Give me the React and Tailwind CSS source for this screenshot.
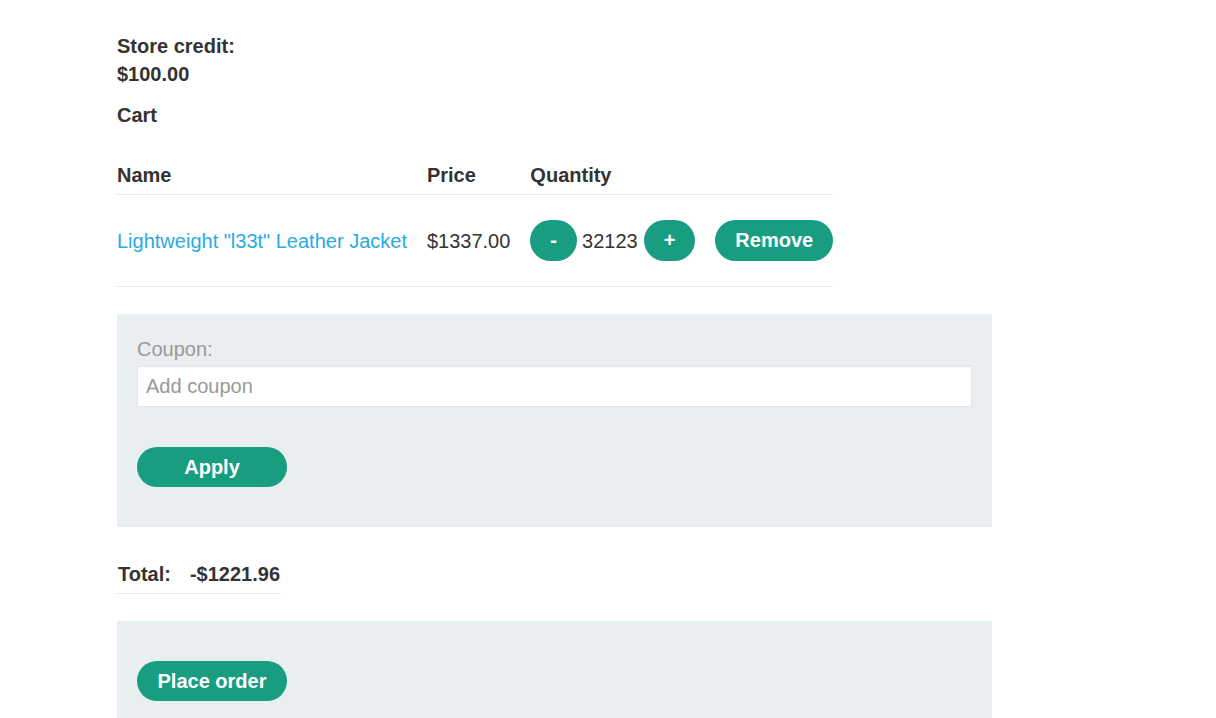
export default function App() {
  const btn =
    'h-[41px] rounded-full bg-[#189d81] px-[20px] pb-[1px] text-[20px] font-bold leading-none text-white';

  return (
    <div className="min-h-screen bg-white font-['Liberation_Sans',Arial,sans-serif] text-[20px] text-[#333332]">
      <div className="pl-[117px] pt-[32px] pb-[40px]">
        {/* Store credit */}
        <p className="font-bold leading-[28px]">
          Store credit:
          <br />
          $100.00
        </p>
        <p className="mt-[13px] font-bold leading-[28px]">Cart</p>

        {/* Cart table */}
        <table className="mt-[27px] w-[716px] border-collapse">
          <thead>
            <tr className="border-b border-[#e6e6e6]">
              <th className="py-[5px] pr-[20px] text-left font-bold leading-[28px]">Name</th>
              <th className="py-[5px] pr-[20px] text-left font-bold leading-[28px]">Price</th>
              <th className="py-[5px] text-left font-bold leading-[28px]">Quantity</th>
            </tr>
          </thead>
          <tbody>
            <tr className="border-b border-[#e6e6e6]">
              <td className="w-[310px] py-[25px] pr-[20px] align-middle">
                <a href="#" className="whitespace-nowrap text-[#29abe2]">
                  Lightweight "l33t" Leather Jacket
                </a>
              </td>
              <td className="w-[103px] py-[25px] pr-[20px] align-middle whitespace-nowrap">$1337.00</td>
              <td className="py-[25px] align-middle">
                <div className="flex items-center">
                  <button className={btn}>-</button>
                  <span className="ml-[5px] mr-[6px]">32123</span>
                  <button className={btn}>+</button>
                  <button className={`${btn} ml-[20px]`}>Remove</button>
                </div>
              </td>
            </tr>
          </tbody>
        </table>

        {/* Coupon */}
        <div className="mt-[27px] w-[875px] bg-[#e9eef1] px-[20px] pt-[20px] pb-[40px]">
          <label className="block leading-[30px] text-[#999999]">Coupon:</label>
          <input
            placeholder="Add coupon"
            className="mt-[2px] block h-[41px] w-full border border-[#e2e6e8] bg-white px-[8px] text-[20px] text-[#333332] placeholder:text-[#999999] outline-none"
          />
          <button className="mt-[40px] h-[40px] w-[150px] rounded-full bg-[#189d81] pb-[1px] text-[20px] font-bold text-white">
            Apply
          </button>
        </div>

        {/* Total */}
        <table className="mt-[33px] border-collapse">
          <tbody>
            <tr className="border-b border-[#e6e6e6]">
              <th className="pb-[5px] pl-[1px] pr-[19px] text-left font-bold leading-[28px]">Total:</th>
              <th className="pb-[5px] pr-[1px] text-left font-bold leading-[28px]">-$1221.96</th>
            </tr>
          </tbody>
        </table>

        {/* Place order */}
        <div className="mt-[27px] w-[875px] bg-[#e9eef1] px-[20px] pt-[40px] pb-[40px]">
          <button className="h-[40px] w-[150px] rounded-full bg-[#189d81] pb-[1px] text-[20px] font-bold text-white">
            Place order
          </button>
        </div>
      </div>
    </div>
  );
}
